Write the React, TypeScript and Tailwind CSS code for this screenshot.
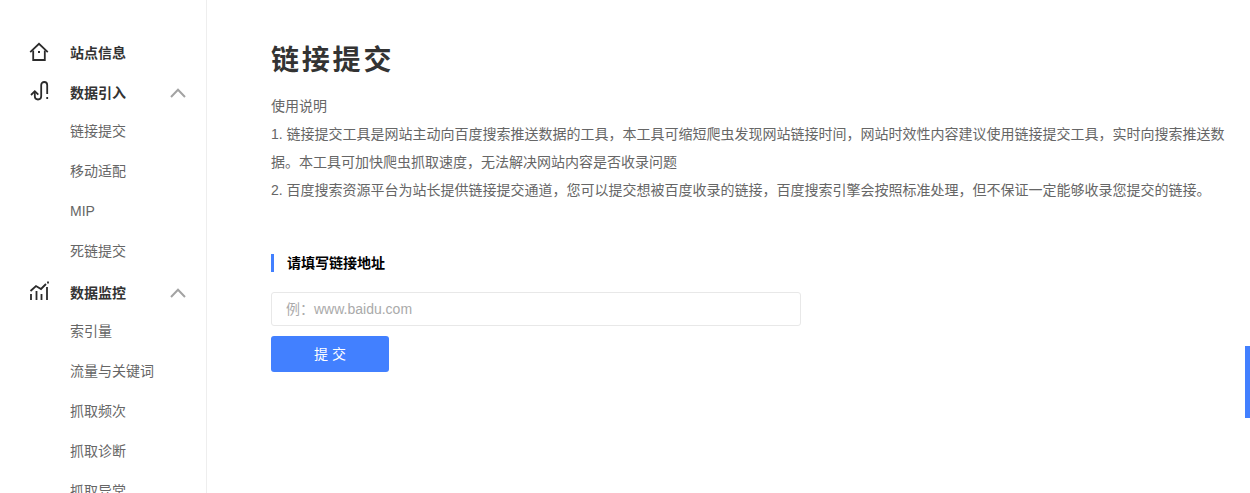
import React from 'react';

const HomeIcon = () => (
  <svg width="20" height="20" viewBox="0 0 20 20" fill="none" stroke="#2b2b2b" strokeWidth="1.8" className="overflow-visible">
    <path d="M1.200 9.200 10 0.800l8.800 8.400" />
    <path d="M4.200 7.500V17h11.600V7.500" />
    <path d="M9 9h2" />
  </svg>
);

const ImportIcon = () => (
  <svg width="20" height="20" viewBox="0 2 20 20" fill="none" stroke="#2b2b2b" strokeWidth="1.8" className="overflow-visible">
    <path d="M2 14 5.800 10.200l3.500 3.500" />
    <path d="M5.800 10.500v4.800a3.200 3.200 0 0 0 6.400 0V4a3 3 0 0 1 6 0V13" />
    <path d="M18.200 16v2" />
  </svg>
);

const MonitorIcon = () => (
  <svg width="20" height="20" viewBox="0 1 20 20" fill="none" stroke="#2b2b2b" strokeWidth="1.8" className="overflow-visible">
    <path d="M1.500 9 7 4l5 3 5-5" />
    <path d="M2 12v6M7.500 9v9M12.500 12v6M18 5v13M19 -0.500v2" />
  </svg>
);

const Chevron = () => (
  <svg width="16" height="10" viewBox="0 0 16 10" fill="none" stroke="#a3a3a3" strokeWidth="2">
    <path d="M1 9 8 1.800 15 9" />
  </svg>
);

const NAV = [
  { title: '站点信息', icon: <HomeIcon />, items: [] as string[] },
  { title: '数据引入', icon: <ImportIcon />, items: ['链接提交', '移动适配', 'MIP', '死链提交'] },
  { title: '数据监控', icon: <MonitorIcon />, items: ['索引量', '流量与关键词', '抓取频次', '抓取诊断', '抓取异常'] },
];

export default function App() {
  return (
    <div className="relative flex h-[493px] overflow-hidden bg-white font-['Liberation_Sans','Noto_Sans_CJK_SC',sans-serif]">
      <aside className="w-[207px] shrink-0 border-r border-[#eeeeee] pt-[34px]">
        {NAV.map(group => (
          <div key={group.title} className="mb-[3px]">
            <div className="flex h-[38px] items-center pl-[29px] pr-[20px]">
              <span className="flex w-[41px] shrink-0">{group.icon}</span>
              <span className="flex-1 text-[14px] font-bold text-[#333333]">{group.title}</span>
              {group.items.length > 0 && <Chevron />}
            </div>
            <div className="-mt-px">
              {group.items.map(item => (
                <div key={item} className="flex h-10 items-center pl-[70px] text-[14px] text-[#666666]">
                  {item}
                </div>
              ))}
            </div>
          </div>
        ))}
      </aside>

      <main className="flex-1 pl-[64px] pr-[20px] pt-[39px]">
        <h1 className="text-[28px] leading-[44px] font-bold tracking-[2.8px] text-[#333333]">链接提交</h1>
        <div className="mt-[9px] text-[14px] leading-[28px] text-[#666666]">
          <p>使用说明</p>
          <p>
            1. 链接提交工具是网站主动向百度搜索推送数据的工具，本工具可缩短爬虫发现网站链接时间，网站时效性内容建议使用链接提交工具，实时向搜索推送数据。本工具可加快爬虫抓取速度，无法解决网站内容是否收录问题
          </p>
          <p>2. 百度搜索资源平台为站长提供链接提交通道，您可以提交想被百度收录的链接，百度搜索引擎会按照标准处理，但不保证一定能够收录您提交的链接。</p>
        </div>
        <div className="mt-[50px] flex h-[18px] items-center border-l-[3px] border-[#4280ff] pl-[13px] text-[14px] font-bold text-black">
          请填写链接地址
        </div>
        <input
          className="mt-[20px] block h-[34px] w-[530px] rounded-[3px] border border-[#e8e8e8] px-[14px] text-[14px] outline-none placeholder:text-[#aaaaaa]"
          placeholder="例：www.baidu.com"
        />
        <button className="mt-[10px] block h-9 w-[118px] rounded-[3px] bg-[#4280ff] text-[14px] text-white">
          提 交
        </button>
      </main>

      <div className="absolute right-0 top-[346px] h-[72px] w-[5px] bg-[#4280ff]" />
    </div>
  );
}
